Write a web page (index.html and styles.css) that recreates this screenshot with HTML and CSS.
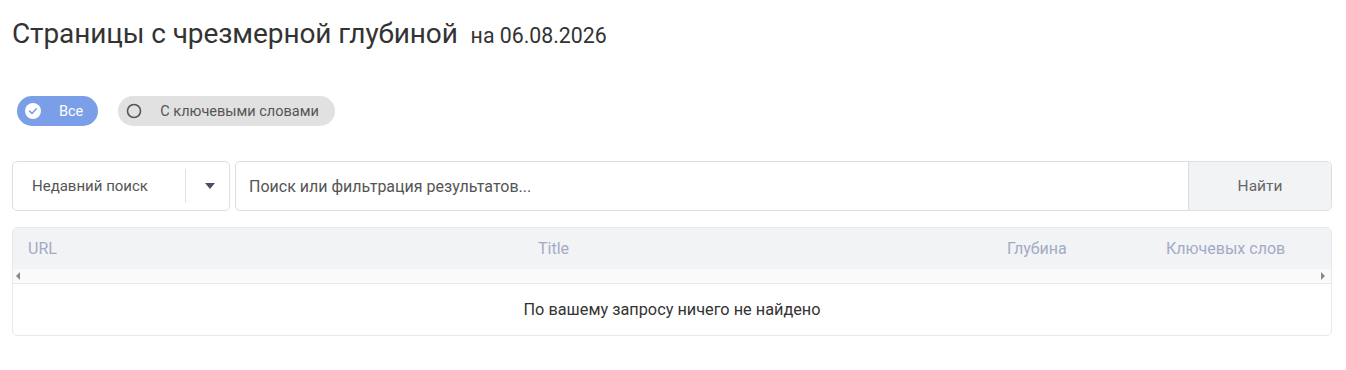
FILE: index.html
```html
<!DOCTYPE html>
<html>

<head>
	<title>Страницы с чрезмерной глубиной</title>
	<link rel="stylesheet" href="styles.css">
</head>

<body>
	<div class="page">
		<h1 class="title">Страницы с чрезмерной глубиной <span class="date">на 06.08.2026</span></h1>

		<!-- filter pills -->
		<div class="pills">
			<div class="pill pill-active">
				<svg width="16" height="16" viewBox="0 0 16 16">
					<circle cx="8" cy="8" r="8" fill="#fff" />
					<path d="M4.6 8.2 L7 10.5 L11.4 5.8" fill="none" stroke="#7b9ee8" stroke-width="1.6" stroke-linecap="round" stroke-linejoin="round" />
				</svg>
				<span>Все</span>
			</div>
			<div class="pill">
				<svg width="16" height="16" viewBox="0 0 16 16">
					<circle cx="8" cy="8" r="6.5" fill="none" stroke="#555" stroke-width="1.6" />
				</svg>
				<span>С ключевыми словами</span>
			</div>
		</div>

		<!-- search row -->
		<div class="search-row">
			<div class="recent">
				<span class="recent-label">Недавний поиск</span>
				<span class="recent-sep"></span>
				<span class="recent-arrow"></span>
			</div>
			<div class="search">
				<div class="search-input">Поиск или фильтрация результатов...</div>
				<div class="search-btn">Найти</div>
			</div>
		</div>

		<!-- results table -->
		<div class="table">
			<div class="table-head">
				<div class="col col-url">URL</div>
				<div class="col col-title">Title</div>
				<div class="col col-depth">Глубина</div>
				<div class="col col-keys">Ключевых слов</div>
			</div>
			<div class="scrollbar">
				<span class="arrow-left"></span>
				<span class="arrow-right"></span>
			</div>
			<div class="empty">По вашему запросу ничего не найдено</div>
		</div>
	</div>
</body>

</html>
```

FILE: styles.css
```css
body {
	margin: 0;
	padding: 0;
	background-color: #fff;
	font-family: "Roboto", "Noto Sans", sans-serif;
	color: #333;
}

.page {
	padding: 0 14px 0 12px;
}

.title {
	margin: 0;
	padding-top: 17px;
	height: 96px;
	box-sizing: border-box;
	font-size: 28px;
	line-height: 34px;
	font-weight: 400;
	color: #333;
	letter-spacing: -0.1px;
}

.date {
	font-size: 21.3px;
	margin-left: 6px;
	letter-spacing: 0;
}

.pills {
	display: flex;
	gap: 20px;
	padding-left: 5px;
	height: 65px;
	align-items: flex-start;
}

.pill {
	display: flex;
	align-items: center;
	height: 30px;
	padding: 0 16px 0 8px;
	border-radius: 15px;
	background-color: #e1e1e1;
	font-size: 14.5px;
	color: #555;
}

.pill span {
	margin-left: 18px;
}

.pill-active {
	background-color: #7b9ee8;
	color: #fff;
	padding-right: 15px;
}

.search-row {
	display: flex;
	gap: 5px;
	height: 50px;
}

.recent {
	width: 218px;
	box-sizing: border-box;
	border: 1px solid #dcdee4;
	border-radius: 5px;
	display: flex;
	align-items: center;
	font-size: 15px;
	color: #555;
}

.recent-label {
	margin-left: 19px;
	width: 153px;
}

.recent-sep {
	width: 1px;
	height: 34px;
	background-color: #e3e3e3;
}

.recent-arrow {
	margin-left: 19px;
	width: 0;
	height: 0;
	border-left: 5px solid transparent;
	border-right: 5px solid transparent;
	border-top: 6px solid #4a5060;
}

.search {
	flex: 1;
	display: flex;
	border: 1px solid #dcdee4;
	border-radius: 5px;
	overflow: hidden;
}

.search-input {
	flex: 1;
	display: flex;
	align-items: center;
	padding-left: 13px;
	font-size: 16px;
	color: #555;
}

.search-btn {
	width: 142px;
	border-left: 1px solid #dcdee4;
	background-color: #f2f3f5;
	display: flex;
	align-items: center;
	justify-content: center;
	font-size: 15.5px;
	color: #666;
}

.table {
	margin-top: 16px;
	border: 1px solid #e6e9ef;
	border-radius: 5px;
	overflow: hidden;
}

.table-head {
	display: grid;
	grid-template-columns: 525px 469px 158px 1fr;
	height: 41px;
	align-items: center;
	background-color: #f2f3f5;
	font-size: 16px;
	color: #a2abc6;
}

.col-url {
	padding-left: 15px;
}

.col-keys {
	padding-left: 1px;
}

.scrollbar {
	height: 14px;
	background-color: #fafafa;
	border-bottom: 1px solid #e6e9ef;
	display: flex;
	justify-content: space-between;
	align-items: center;
	padding: 0 6px 0 3px;
}

.arrow-left {
	width: 0;
	height: 0;
	border-top: 4px solid transparent;
	border-bottom: 4px solid transparent;
	border-right: 4px solid #888;
}

.arrow-right {
	width: 0;
	height: 0;
	border-top: 4px solid transparent;
	border-bottom: 4px solid transparent;
	border-left: 4px solid #888;
}

.empty {
	height: 51px;
	display: flex;
	align-items: center;
	justify-content: center;
	font-size: 16.3px;
	color: #333;
}
```
